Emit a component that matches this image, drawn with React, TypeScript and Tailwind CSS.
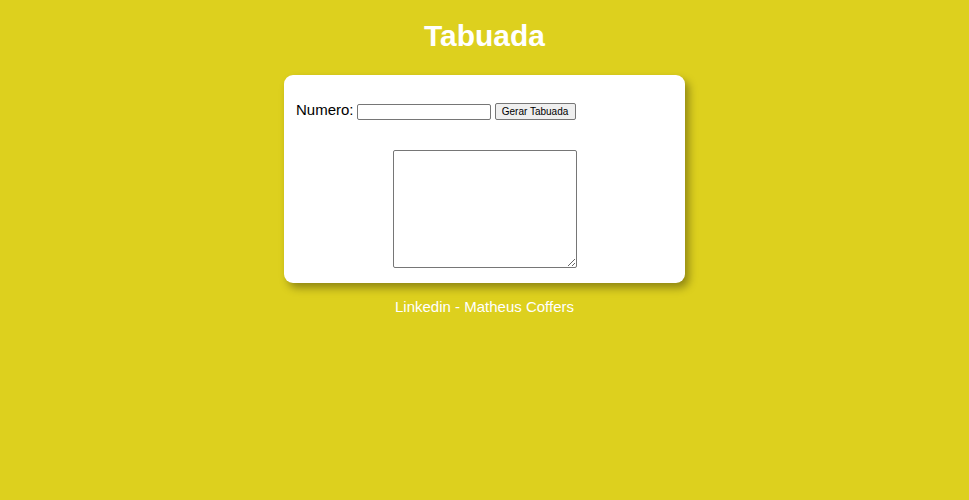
import { useState } from 'react';

export default function App() {
  const [numero, setNumero] = useState('');
  const [saida, setSaida] = useState('');

  // monta a tabuada de 1 a 10 para o numero digitado
  const gerar = () => {
    const n = Number(numero);
    if (numero === '' || isNaN(n)) return;
    const linhas = Array.from({ length: 10 }, (_, i) => `${n} x ${i + 1} = ${n * (i + 1)}`);
    setSaida(linhas.join('\n'));
  };

  return (
    <div
      className="min-h-[500px] w-full bg-[#ddd01e] flex flex-col items-center"
      style={{ fontFamily: '"Liberation Sans", Arial, sans-serif' }}
    >
      <h1 className="mt-[19px] text-[30px] leading-[34px] font-bold text-white">Tabuada</h1>

      <div className="mt-[22px] w-[401px] h-[208px] bg-white rounded-[9px] shadow-[4px_5px_8px_rgba(0,0,0,0.35)] flex flex-col pl-[12px] pt-[26px]">
        <div className="flex items-start">
          <span className="text-[15px] leading-[18px] text-black">Numero:</span>
          <input
            type="text"
            value={numero}
            onChange={e => setNumero(e.target.value)}
            className="ml-[3px] mt-[3px] w-[134px] h-[16px] border border-[#767676] rounded-[2px] bg-white text-[11px] px-[2px] outline-none"
          />
          <button
            onClick={gerar}
            className="ml-[4px] mt-[2px] w-[81px] h-[17px] border border-[#767676] rounded-[2px] bg-[#efefef] text-[10px] leading-[15px] text-black"
          >
            Gerar Tabuada
          </button>
        </div>

        <textarea
          value={saida}
          readOnly
          className="mt-[30px] ml-[97px] w-[184px] h-[118px] border border-[#767676] rounded-[2px] bg-white text-[11px] resize outline-none"
        />
      </div>

      <a href="#" className="mt-[15px] text-[15px] leading-[18px] text-white">
        Linkedin - Matheus Coffers
      </a>
    </div>
  );
}
